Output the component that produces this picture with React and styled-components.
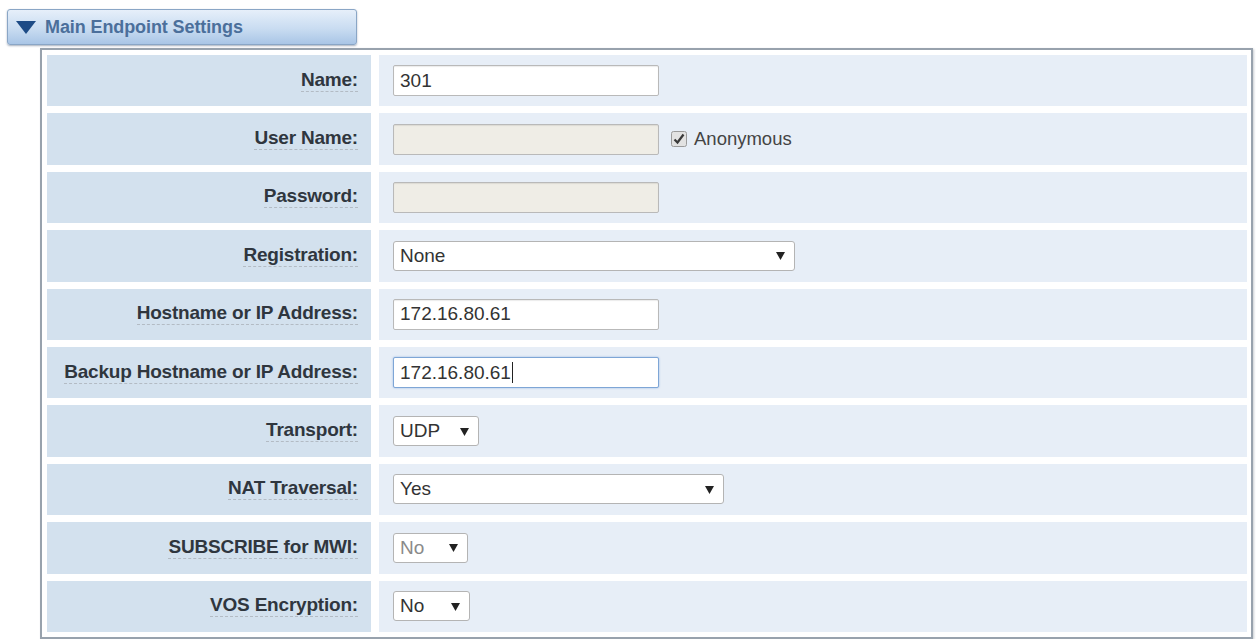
import React from "react";
import styled, { createGlobalStyle } from "styled-components";

const GlobalStyle = createGlobalStyle`
  body {
    margin: 0;
    background: #ffffff;
    font-family: "Liberation Sans", Arial, sans-serif;
  }
`;

const Page = styled.div`
  padding: 9px 4px 0 7px;
`;

// collapsible section tab
const SectionTab = styled.div`
  display: flex;
  align-items: center;
  gap: 9px;
  width: 350px;
  height: 36px;
  box-sizing: border-box;
  padding-left: 8px;
  border: 1px solid #8aa6c6;
  border-radius: 3px;
  background: linear-gradient(to bottom, #e6effa 0%, #c9dcf1 55%, #a9c5e6 100%);
  box-shadow: 0 1px 2px rgba(60, 80, 110, 0.45);
  color: #4b6f9b;
  font-size: 18px;
  font-weight: bold;
  letter-spacing: -0.1px;
`;

const Arrow = styled.svg`
  width: 20px;
  height: 13px;
  flex: none;
`;

const Panel = styled.div`
  margin: 3px 0 0 33px;
  border: 2px solid #98a2ad;
  box-shadow: 1px 1px 2px rgba(120, 130, 140, 0.4);
  padding: 5px 4px 5px 5px;
  display: grid;
  grid-template-columns: 324px 1fr;
  column-gap: 8px;
  row-gap: 7px;
`;

const LabelCell = styled.div`
  height: 51.4px;
  background: #d3e1ee;
  display: flex;
  align-items: center;
  justify-content: flex-end;
  padding-right: 13px;
`;

const Label = styled.span`
  font-size: 19px;
  font-weight: bold;
  color: #2f363e;
  letter-spacing: -0.2px;
  padding-bottom: 1px;
  border-bottom: 1px dashed #b3bbc4;
  line-height: 20px;
`;

const ValueCell = styled.div`
  height: 51.4px;
  background: #e7eef7;
  display: flex;
  align-items: center;
  gap: 12px;
  padding-left: 14px;
`;

const TextBox = styled.div`
  width: ${(p) => p.$width || 266}px;
  height: 31px;
  box-sizing: border-box;
  display: flex;
  align-items: center;
  padding-left: 6px;
  border: 1px solid ${(p) => (p.$focus ? "#7ea6d6" : "#b9b9b9")};
  border-radius: 2px;
  background: ${(p) => (p.$disabled ? "#efede6" : "#ffffff")};
  box-shadow: ${(p) =>
    p.$focus ? "0 0 2px rgba(90, 140, 210, 0.6)" : "inset 0 1px 1px rgba(0,0,0,0.08)"};
  font-size: 19px;
  color: #333;
`;

const Caret = styled.span`
  display: inline-block;
  width: 1px;
  height: 21px;
  margin-left: 1px;
  background: #222;
`;

const SelectBox = styled.div`
  width: ${(p) => p.$width}px;
  height: 30px;
  box-sizing: border-box;
  display: flex;
  align-items: center;
  justify-content: space-between;
  padding: 0 9px 0 6px;
  border: 1px solid #b4b4b4;
  border-radius: 3px;
  background: #ffffff;
  font-size: 19px;
  color: ${(p) => (p.$disabled ? "#8a8a8a" : "#333")};
`;

const Drop = styled.svg`
  width: 9px;
  height: 9px;
  flex: none;
`;

const CheckWrap = styled.label`
  display: flex;
  align-items: center;
  gap: 7px;
  font-size: 18.5px;
  color: #444;
`;

const Check = styled.svg`
  width: 16px;
  height: 16px;
  flex: none;
`;

const rows = [
  { label: "Name:", field: { type: "text", value: "301" } },
  { label: "User Name:", field: { type: "text", disabled: true }, anonymous: true },
  { label: "Password:", field: { type: "text", disabled: true } },
  { label: "Registration:", field: { type: "select", value: "None", width: 402 } },
  { label: "Hostname or IP Address:", field: { type: "text", value: "172.16.80.61" } },
  { label: "Backup Hostname or IP Address:", field: { type: "text", value: "172.16.80.61", focus: true } },
  { label: "Transport:", field: { type: "select", value: "UDP", width: 86 } },
  { label: "NAT Traversal:", field: { type: "select", value: "Yes", width: 331 } },
  { label: "SUBSCRIBE for MWI:", field: { type: "select", value: "No", width: 75, disabled: true } },
  { label: "VOS Encryption:", field: { type: "select", value: "No", width: 77 } },
];

function Field({ field }) {
  if (field.type === "select") {
    return (
      <SelectBox $width={field.width} $disabled={field.disabled}>
        <span>{field.value}</span>
        <Drop viewBox="0 0 9 9">
          <polygon points="0,1 9,1 4.5,9" fill="#222" />
        </Drop>
      </SelectBox>
    );
  }
  return (
    <TextBox $disabled={field.disabled} $focus={field.focus}>
      {field.value}
      {field.focus && <Caret />}
    </TextBox>
  );
}

export default function App() {
  return (
    <Page>
      <GlobalStyle />
      <SectionTab>
        <Arrow viewBox="0 0 20 13">
          <polygon points="0,0 20,0 10,13" fill="#1d4b86" />
        </Arrow>
        Main Endpoint Settings
      </SectionTab>
      <Panel>
        {rows.map((row) => (
          <React.Fragment key={row.label}>
            <LabelCell>
              <Label>{row.label}</Label>
            </LabelCell>
            <ValueCell>
              <Field field={row.field} />
              {row.anonymous && (
                <CheckWrap>
                  <Check viewBox="0 0 16 16">
                    <rect x="0.5" y="0.5" width="15" height="15" rx="2" fill="#e2e2e2" stroke="#9a9a9a" />
                    <path d="M3.5 8.5 L6.5 11.5 L12.5 3.5" fill="none" stroke="#3a3a3a" strokeWidth="2.2" />
                  </Check>
                  Anonymous
                </CheckWrap>
              )}
            </ValueCell>
          </React.Fragment>
        ))}
      </Panel>
    </Page>
  );
}
